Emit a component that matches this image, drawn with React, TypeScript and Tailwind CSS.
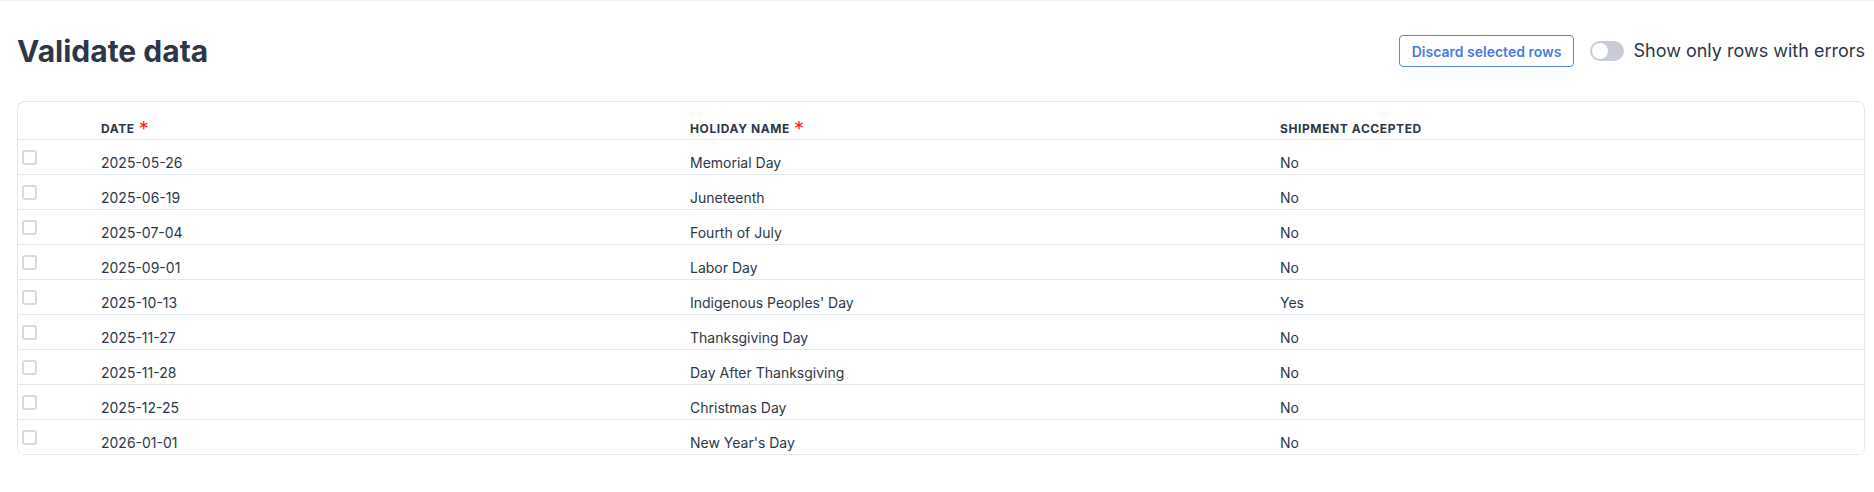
import React from 'react';

const rows = [
  { date: '2025-05-26', name: 'Memorial Day', accepted: 'No' },
  { date: '2025-06-19', name: 'Juneteenth', accepted: 'No' },
  { date: '2025-07-04', name: 'Fourth of July', accepted: 'No' },
  { date: '2025-09-01', name: 'Labor Day', accepted: 'No' },
  { date: '2025-10-13', name: "Indigenous Peoples' Day", accepted: 'Yes' },
  { date: '2025-11-27', name: 'Thanksgiving Day', accepted: 'No' },
  { date: '2025-11-28', name: 'Day After Thanksgiving', accepted: 'No' },
  { date: '2025-12-25', name: 'Christmas Day', accepted: 'No' },
  { date: '2026-01-01', name: "New Year's Day", accepted: 'No' },
];

const cols = 'grid grid-cols-[83px_589px_590px_1fr]';

function HeaderCell({ label, required }: { label: string; required?: boolean }) {
  return (
    <div className="flex items-start pt-[19px] text-[12px] leading-4 font-bold tracking-[0.05em] uppercase text-[#2d3748]">
      <span>{label}</span>
      {required && (
        <span className="ml-[4px] -mt-[2px] text-[20px] leading-none font-normal text-[#ff1f1f]">*</span>
      )}
    </div>
  );
}

export default function App() {
  return (
    <div
      className="min-h-[492px] w-full bg-white border-t border-[#edf2f7] pl-[17px] pr-[9px]"
      style={{ fontFamily: 'Inter, "Noto Sans", sans-serif' }}
    >
      {/* Header */}
      <div className="flex items-center justify-between pt-[32px]">
        <h1 className="text-[30px] leading-9 font-bold text-[#2d3748]">Validate data</h1>
        <div className="flex items-center">
          <button className="h-8 px-3 rounded-[4px] border border-[#4f86ee] text-[14px] font-semibold text-[#4a7ae0]">
            Discard selected rows
          </button>
          <div className="ml-[16px] flex items-center gap-[9px]">
            <div className="w-[34px] h-5 rounded-full bg-[#c9ccd6] p-[2px] flex items-center">
              <div className="w-4 h-4 rounded-full bg-white" />
            </div>
            <span className="text-[18px] leading-6 text-[#2d3748]">Show only rows with errors</span>
          </div>
        </div>
      </div>

      {/* Table */}
      <div className="mt-[32px] border border-b-0 border-[#e2e8f0] rounded-lg overflow-hidden">
        <div className={`${cols} h-[38px] border-b border-[#e2e8f0]`}>
          <div />
          <HeaderCell label="Date" required />
          <HeaderCell label="Holiday name" required />
          <HeaderCell label="Shipment accepted" />
        </div>
        {rows.map((r) => (
          <div key={r.date} className={`${cols} h-[35px] border-b border-[#e2e8f0] text-[14px] leading-5 text-[#2d3748]`}>
            <div className="pl-[4px] pt-[10px]">
              <div className="w-[15px] h-[15px] rounded-[3px] border-2 border-[#dadada] bg-white" />
            </div>
            <div className="pt-[13px]">{r.date}</div>
            <div className="pt-[13px]">{r.name}</div>
            <div className="pt-[13px]">{r.accepted}</div>
          </div>
        ))}
      </div>
    </div>
  );
}
